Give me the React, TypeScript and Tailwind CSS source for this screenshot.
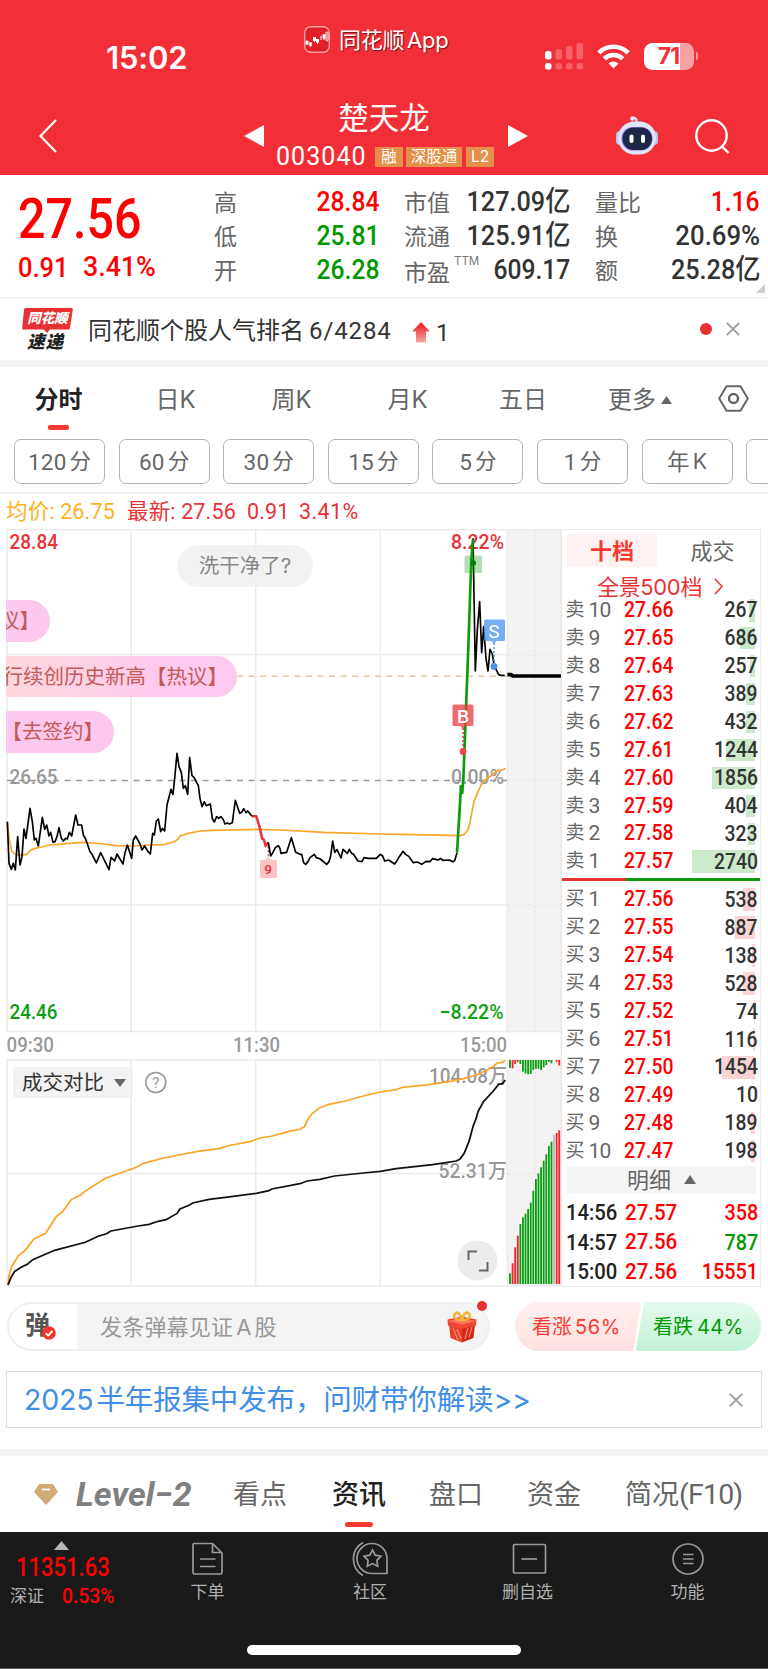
import React from "react";

const DIN = "font-['Roboto','Noto_Sans_CJK_SC',sans-serif] font-medium";

/* Narrow numerals; `right` keeps the right edge in place. */
function Num({ children, className = "", right = false }: { children: React.ReactNode; className?: string; right?: boolean }) {
  return (
    <span className={`${DIN} inline-block scale-x-[0.88] whitespace-nowrap ${right ? "origin-right" : "origin-left"} ${className}`}>
      {children}
    </span>
  );
}

function CloseIcon({ className }: { className: string }) {
  return (
    <svg viewBox="0 0 14 14" className={className} stroke="#999" strokeWidth="1.7" fill="none">
      <path d="M.8 .8 13.2 13.2M13.2 .8 .8 13.2" />
    </svg>
  );
}

function StatusBar() {
  return (
    <div className="flex h-[88px] items-start">
      <div className="ml-[106px] mt-[37.500px] w-[198px] text-[31px] font-semibold leading-[40px] tracking-[-0.200px]">15:02</div>
      <svg viewBox="0 0 26 27" className="mt-[26px] h-[27px] w-[26px]">
        <rect x=".7" y=".7" width="24.6" height="25.6" rx="6" fill="#e21f26" stroke="#f9a0a3" strokeWidth="1.4" />
        <g stroke="#fff" strokeWidth="1" fill="#fff">
          <path d="M3 14v5M6.500 16v5M10.500 11v5M13.500 13v5M17 10v4M20 8v6" fill="none" />
          <rect x="2" y="15.500" width="2" height="2.500" />
          <rect x="5.700" y="17" width="1.600" height="2.500" fill="none" />
          <rect x="9.500" y="11.500" width="2" height="3" fill="none" />
          <rect x="12.500" y="13.500" width="2" height="2.500" />
          <rect x="19" y="9" width="2" height="3" />
          <rect x="22" y="6" width="2" height="9" rx="1" fill="none" />
        </g>
      </svg>
      <div className="ml-[9px] mt-[24.500px] w-[206px] text-[22px] leading-[30px] tracking-[-0.300px] [text-shadow:1px_1px_1px_rgba(0,0,0,0.55)]">
        同花顺<span className="ml-[3px]">App</span>
      </div>
      <svg viewBox="0 0 38 27" className="mt-[43px] h-[27px] w-[38px]" fill="#fff">
        <rect x="0" y="8" width="6.500" height="8.500" rx="2.500" />
        <rect x="0" y="20" width="6.500" height="6.500" rx="2.500" />
        <g opacity=".25">
          <rect x="10.500" y="6" width="6.500" height="10.500" rx="2.500" />
          <rect x="21" y="3" width="6.500" height="13.500" rx="2.500" />
          <rect x="31.500" y="0" width="6.500" height="16.500" rx="2.500" />
          <rect x="10.500" y="20" width="6.500" height="6.500" rx="2.500" />
          <rect x="21" y="20" width="6.500" height="6.500" rx="2.500" />
          <rect x="31.500" y="20" width="6.500" height="6.500" rx="2.500" />
        </g>
      </svg>
      <svg viewBox="0 0 33 25" className="ml-[13.500px] mt-[44px] h-[25px] w-[33px]" fill="none" stroke="#fff" strokeWidth="4.600">
        <path d="M1.800 8.800a21 21 0 0 1 29.400 0" />
        <path d="M7.300 14.800a13.200 13.200 0 0 1 18.400 0" />
        <path d="M16.500 24.500l-4.900-5a7 7 0 0 1 9.800 0z" fill="#fff" stroke="none" />
      </svg>
      <div className="ml-[14px] mt-[43px] flex items-center">
        <div className="flex h-[26.500px] w-[50px] items-center justify-center rounded-[8.500px] bg-[linear-gradient(90deg,#fff_71%,#f9a0a3_71%)] text-[23px] font-bold leading-none tracking-[-0.800px] text-[#f22f37]">
          71
        </div>
        <div className="ml-[2px] h-[8px] w-[2.500px] rounded-r-full bg-[#f9a0a3]" />
      </div>
    </div>
  );
}

function TitleBar() {
  return (
    <div className="flex h-[87px] items-start">
      <svg viewBox="0 0 18 34" className="ml-[39px] mt-[31px] h-[34px] w-[18px]" fill="none" stroke="#fff" strokeWidth="2.200">
        <path d="M17 1 1.500 17 17 33" />
      </svg>
      <svg viewBox="0 0 20 22" className="ml-[187px] mt-[37px] h-[22px] w-[20px]" fill="#fff">
        <path d="M0 11 20 0V22z" />
      </svg>
      <div className="w-[244px] pt-[12px]">
        <div className="pr-[4px] text-center text-[30.500px] leading-[36px]">楚天龙</div>
        <div className="ml-[12px] mt-[9px] flex h-[24px] items-center">
          <span className="w-[99px] font-['Roboto'] text-[25px] leading-[24px] tracking-[1.050px]">003040</span>
          <span className="flex h-[20px] w-[28px] items-center justify-center bg-[#e5904a] text-[15.500px]">融</span>
          <span className="ml-[3px] flex h-[20px] w-[56px] items-center justify-center bg-[#e5904a] text-[15.500px]">深股通</span>
          <span className="ml-[4px] flex h-[20px] w-[28px] items-center justify-center bg-[#e5904a] text-[15.500px]">L2</span>
        </div>
      </div>
      <svg viewBox="0 0 20 22" className="mt-[37px] h-[22px] w-[20px]" fill="#fff">
        <path d="M20 11 0 0V22z" />
      </svg>
      <svg viewBox="0 0 42 39" className="ml-[88px] mt-[28px] h-[39px] w-[42px]">
        <path d="M20.500 7V4.500q0-2.500-3-2.800" stroke="#cfd6f2" strokeWidth="2.200" fill="none" />
        <circle cx="16.500" cy="2.500" r="2.300" fill="#e6eafb" />
        <rect x="0" y="15" width="8" height="14" rx="4" fill="#b9c4ee" />
        <rect x="34" y="15" width="8" height="14" rx="4" fill="#b9c4ee" />
        <rect x="2" y="5.500" width="38" height="33" rx="16.500" fill="#dfe5fa" />
        <rect x="5.500" y="11" width="31" height="23.500" rx="11.500" fill="#8d7bf0" />
        <rect x="6.500" y="11.500" width="29.500" height="22.500" rx="11" fill="#1d2748" />
        <rect x="13.500" y="18.500" width="4" height="8.500" rx="2" fill="#fff" />
        <rect x="25" y="18.500" width="4" height="8.500" rx="2" fill="#fff" />
      </svg>
      <svg viewBox="0 0 35 35" className="ml-[37px] mt-[31px] h-[35px] w-[35px]" fill="none" stroke="#fff" strokeWidth="2.400">
        <circle cx="16.500" cy="16.500" r="15.200" />
        <path d="M27 27.500 33.500 34" />
      </svg>
    </div>
  );
}

function QuoteCol({ rows, className }: { rows: [React.ReactNode, string, string][]; className: string }) {
  return (
    <div className={className}>
      {rows.map(([label, value, color], i) => (
        <div key={i} className="flex h-[34px] items-center justify-between whitespace-nowrap">
          <span className="pt-[2px] text-[23px] leading-[32px] text-[#666]">{label}</span>
          <Num right className={`text-[28px] leading-[34px] ${value.endsWith("亿") ? "scale-x-[0.9]!" : value.endsWith("%") ? "scale-x-[0.92]!" : ""} ${color}`}>{value}</Num>
        </div>
      ))}
    </div>
  );
}

function Quote() {
  return (
    <section className="flex h-[124px] border-b-2 border-[#f3f3f3] pt-[10px]">
      <div className="w-[214px] pl-[18px] text-[#f00]">
        <div className="mt-[5px] h-[56px]"><Num className="text-[55px] leading-[58px]">27.56</Num></div>
        <div className="mt-[4px] flex h-[34px] text-[28px] leading-[34px]">
          <span className="w-[64.500px]"><Num className="scale-x-[0.91]!">0.91</Num></span>
          <Num className="scale-x-[0.955]!">3.41%</Num>
        </div>
      </div>
      <QuoteCol className="w-[165px]" rows={[["高", "28.84", "text-[#f00]"], ["低", "25.81", "text-[#009900]"], ["开", "26.28", "text-[#009900]"]]} />
      <QuoteCol
        className="ml-[25px] w-[166px]"
        rows={[
          ["市值", "127.09亿", "text-[#333]"],
          ["流通", "125.91亿", "text-[#333]"],
          [<span className="flex items-start pt-[3px]">市盈<span className="ml-[4px] mt-[-1px] text-[11.500px] leading-[11px] text-[#777]">TTM</span></span>, "609.17", "text-[#333]"],
        ]}
      />
      <QuoteCol className="ml-[25px] w-[165px]" rows={[["量比", "1.16", "text-[#f00]"], ["换", "20.69%", "text-[#333]"], ["额", "25.28亿", "text-[#333]"]]} />
      <svg viewBox="0 0 9 9" className="-ml-[4px] mb-[4px] h-[9px] w-[9px] self-end" fill="#ccc">
        <path d="M9 0V9H0z" />
      </svg>
    </section>
  );
}

function Banner() {
  return (
    <section className="flex h-[61px] items-start">
      <div className="relative ml-[22px] mt-[9px] h-[43px] w-[51px]">
        <svg viewBox="0 0 51 43" className="absolute inset-0 h-[43px] w-[51px]">
          <path d="M3.500 0H49.500q1.500 0 1.300 1.500L48 20q-.3 1.500-2 1.500H28l-3 3.500-3-3.500H1.500q-1.500 0-1.300-1.500L2 1.500Q2.200 0 3.500 0z" fill="#e93033" />
        </svg>
        <div className="relative flex h-[22px] items-center justify-center text-[13.500px] font-black italic leading-none text-white">同花顺</div>
        <div className="relative ml-[5px] mt-[3px] text-[17.500px] font-black italic leading-[18px] tracking-[1px] text-[#222]">速递</div>
      </div>
      <div className="ml-[15px] mt-[15.500px] w-[324px] whitespace-nowrap text-[24px] leading-[32px] text-[#333]">
        同花顺个股人气排名<span className="ml-[5px] font-['Roboto'] tracking-[0.900px]">6/4284</span>
      </div>
      <svg viewBox="0 0 18 21" className="mt-[23px] h-[21px] w-[18px]">
        <defs>
          <linearGradient id="up" x1="0" y1="0" x2="0" y2="1">
            <stop offset="0.200" stopColor="#e93033" />
            <stop offset="1" stopColor="#f8a9a9" />
          </linearGradient>
        </defs>
        <path d="M9 0 18 9.500H14V20.500H4V9.500H0z" fill="url(#up)" />
      </svg>
      <div className="ml-[6px] mt-[17.500px] w-[264px] font-['Roboto'] text-[24px] leading-[32px] text-[#333]">1</div>
      <div className="mt-[24px] h-[12px] w-[12px] rounded-full bg-[#ea3032]" />
      <CloseIcon className="ml-[14px] mt-[23px] h-[14px] w-[14px]" />
    </section>
  );
}

function PeriodTabs() {
  return (
    <nav className="flex h-[68px] items-start text-[24px] leading-[32px] text-[#666]">
      <div className="w-[117px] pt-[17px] text-center font-bold text-[#222]">
        分时
        <div className="mx-auto mt-[9px] h-[5px] w-[21px] rounded-[2px] bg-[#fd3a31]" />
      </div>
      <div className="w-[117px] pt-[17px] text-center">日K</div>
      <div className="w-[115px] pt-[17px] text-center">周K</div>
      <div className="w-[117px] pt-[17px] text-center">月K</div>
      <div className="w-[114px] pt-[17px] text-center">五日</div>
      <div className="flex w-[138px] items-center pl-[28px] pt-[17px]">
        更多
        <svg viewBox="0 0 11 8" className="ml-[5px] h-[8px] w-[11px]" fill="#666"><path d="M5.500 0 11 8H0z" /></svg>
      </div>
      <svg viewBox="0 0 31 27" className="mt-[18px] h-[27px] w-[31px]" fill="none" stroke="#666" strokeWidth="2">
        <path d="M8.500 1.200H22.500L29.800 13.500 22.500 25.800H8.500L1.200 13.500z" strokeLinejoin="round" />
        <circle cx="15.500" cy="13.500" r="4.500" strokeWidth="2.400" />
      </svg>
    </nav>
  );
}

function Minutes() {
  const items = [["120", "分"], ["60", "分"], ["30", "分"], ["15", "分"], ["5", "分"], ["1", "分"], ["年", "K"], ["", ""]];
  return (
    <div className="flex h-[59px] gap-[13.600px] overflow-hidden border-b-2 border-[#efefef] pl-[14px] pt-[4px]">
      {items.map(([a, b], i) => (
        <div key={i} className="flex h-[45px] w-[91px] shrink-0 items-center justify-center gap-[3px] rounded-[7px] border-[1.500px] border-[#b4b4b4] pt-[1px] leading-none text-[#666]">
          <span className="font-['Roboto','Noto_Sans_CJK_SC',sans-serif] text-[22.500px] tracking-[0.200px]">{a}</span>
          <span className="text-[21.500px]">{b}</span>
        </div>
      ))}
    </div>
  );
}

function InfoLine() {
  return (
    <div className="flex h-[35px] items-center pl-[6px] font-['Roboto','Noto_Sans_CJK_SC',sans-serif] text-[21.500px] leading-[30px] tracking-[0.150px] text-[#e83236]">
      <span className="w-[121px] text-[#fcb21c]">均价: 26.75</span>
      <span className="w-[120px]">最新: 27.56</span>
      <span className="w-[52px]">0.91</span>
      <span className="tracking-[0.400px]">3.41%</span>
    </div>
  );
}

const PRICE_MORNING =
  "22,905 27,1030 34,1048 40,1030 46,1050 53,950 60,1035 66,1010 72,927 78,955 90,865 97,905 103,960 108,955 115,978 127,892 134,928 140,915 147,948 152,937 159,967 165,965 171,950 177,923 184,955 190,963 197,955 202,957 208,937 215,948 227,885 234,915 245,915 250,945 257,957 270,995 276,1003 289,1029 302,998 327,1049 333,1012 344,1023 351,1002 369,1032 375,998 382,975 395,1015 400,960 407,948 420,972 426,990 434,978 444,995 451,1002 458,940 463,945 469,903 475,897 482,935 487,925 494,933 501,855 513,808 519,823 524,775 531,700 537,740 544,758 550,805 556,797 563,823 569,713 576,767 582,772 595,797 600,835 606,860 613,845 619,857 631,852 637,895 643,906 650,890 656,895 662,890 669,897 675,912 682,909 688,912 697,908 700,885 706,841 719,880 725,877 731,866 738,878 743,873 756,889";
const PRICE_NINE = "756,889 769,889 776,912 780,925 786,955 792,960 797,978 805,967";
const PRICE_AFTERNOON =
  "-35,967 -28,1008 -22,999 -14,983 -5,977 0,985 3,1000 20,997 27,975 34,953 47,997 60,1003 65,1003 71,1028 77,1033 84,1025 90,1013 103,1003 109,1013 121,1017 140,1033 147,1025 152,1008 158,963 164,997 171,989 183,1014 189,988 202,1000 208,988 215,1000 221,1003 234,1023 246,1025 252,1013 264,1015 289,1015 301,1003 308,1008 314,1023 326,1020 344,1032 351,1022 358,1010 369,994 377,1003 387,1010 400,1028 412,1026 425,1033 438,1024 450,1025 457,1016 467,1018 475,1020 482,1015 489,1021 508,1020 518,1025 524,1022 531,998";
const PRICE_SURGE = "531,998 543,800 546,818 550,780 565,380 574,120 579,58";
const PRICE_CLOSE =
  "579,55 586,453 592,330 599,245 605,398 611,320 618,415 624,453 630,388 637,402 643,440 650,452 656,464 663,466 674,466";
const AVERAGE =
  "22,905 27,955 35,993 45,1002 60,1006 80,1003 92,990 105,985 125,981 150,975 200,971 250,967 275,969 310,972 350,977 400,978 450,975 490,974 520,966 535,957 540,948 565,940 600,933 640,931 770,928 840,930 920,934 970,937 1140,942 1240,944 1380,947 1393,943 1403,930 1409,912 1415,880 1422,845 1433,818 1443,795 1455,780 1480,762 1495,750 1508,750 1516,745";
const VOL_PREV =
  "22,915 25,885 32,860 50,828 72,808 92,778 125,760 155,710 172,695 197,658 222,645 232,635 290,595 333,578 372,563 395,550 450,534 540,515 605,505 625,498 690,484 715,474 750,468 795,454 825,448 838,440 848,415 860,400 880,383 905,373 950,363 1000,348 1046,336 1090,329 1107,322 1180,314 1240,304 1275,296 1310,286 1340,270 1357,260 1368,249 1382,247 1390,242";
const VOL_NOW =
  "22,915 30,893 40,875 58,862 75,853 90,839 150,811 235,787 270,769 293,761 305,753 380,738 410,733 435,724 457,719 487,700 495,687 520,676 530,669 575,658 620,652 705,640 740,632 748,627 825,611 845,603 880,598 920,588 1000,579 1046,574 1090,566 1190,554 1255,543 1265,538 1277,520 1290,485 1302,437 1310,415 1315,395 1330,365 1357,333 1372,313 1383,311 1390,300";

const R = "#f5222a";
const G = "#0a9f10";
const AUCTION: [number, string][] = [
  [880, G], [850, R], [802, R], [767, R], [732, G], [712, G], [701, G], [687, G], [668, G], [632, G],
  [597, G], [580, G], [562, G], [542, G], [523, G], [498, G], [485, G], [465, "#bbb"], [459, R], [451, R],
];
const UNMATCHED: [number, string][] = [
  [24, G], [25, R], [12, R], [6, R], [12, G], [35, G], [40, G], [43, G], [42, G], [30, G],
  [26, G], [26, G], [30, G], [22, G], [15, G], [6, G], [10, G], [0, G], [6, R], [16, R],
];

function Label({ x, y, w, fill, children, size = 20.5 }: { x: number; y: number; w: number; fill: string; children: string; size?: number }) {
  return (
    <text x={x} y={y} textLength={w} lengthAdjust="spacingAndGlyphs" fill={fill} fontSize={size} className={DIN}>
      {children}
    </text>
  );
}

function Pill({ children, className }: { children: string; className: string }) {
  return (
    <div className={`absolute flex h-[41.500px] items-center justify-end whitespace-nowrap pt-[1px] text-[20.500px] leading-none ${className}`}>
      {children}
    </div>
  );
}

function Chart() {
  return (
    <div className="relative h-[760px] w-[562px] overflow-hidden">
      <svg viewBox="0 529 562 760" className="h-[760px] w-[562px]">
        <rect x="508" y="530" width="54" height="502" fill="#f3f3f3" />
        <rect x="508" y="1060" width="54" height="226" fill="#f3f3f3" />
        <g stroke="#ebebeb" strokeWidth="1.500" fill="none">
          <path d="M6 529.750H562M7 654.500H507M7 905H507M6 1031.500H562M6 1060H562M7 1173.500H507M6 1286H562" />
          <path d="M7 529V1032M131.200 529V1032M255.700 529V1032M380.300 529V1032M507.300 529V1032" />
          <path d="M7 1060V1286M131.200 1060V1286M255.700 1060V1286M380.300 1060V1286M507.300 1060V1286" />
          <path d="M561.300 529V1286" stroke="#e6e6e6" />
          <path d="M508 655H561M508 780H561M508 905H561M508 1174H561M535 530V1032M535 1060V1286" stroke="#e9e9e9" strokeDasharray="2 2" />
        </g>
        <path d="M7 676.300H507" stroke="#e3c9a0" strokeWidth="1.500" strokeDasharray="6 5.500" />
        <path d="M7 780.500H507" stroke="#999" strokeWidth="1.500" strokeDasharray="6 5.500" />

        <Label x={9.5} y={549} w={48.5} fill="#e83236">28.84</Label>
        <Label x={9.5} y={784} w={48} fill="#999">26.65</Label>
        <Label x={9.5} y={1019} w={48} fill={G}>24.46</Label>
        <Label x={451} y={549} w={53} fill="#e83236">8.22%</Label>
        <Label x={451} y={784} w={53} fill="#999">0.00%</Label>
        <Label x={439.5} y={1019} w={64} fill={G}>−8.22%</Label>
        <Label x={6.5} y={1052} w={47.5} fill="#999">09:30</Label>
        <Label x={233} y={1052} w={47} fill="#999">11:30</Label>
        <Label x={460} y={1052} w={47} fill="#999">15:00</Label>
        <Label x={429} y={1083} w={78} fill="#999">104.08万</Label>
        <Label x={438.5} y={1178} w={68.5} fill="#999">52.31万</Label>

        <g fill="none" strokeLinejoin="round" transform="translate(0 520) scale(.33333)" strokeWidth="5">
          <polyline points={AVERAGE} stroke="#faa628" />
          <polyline points={PRICE_MORNING} stroke="#000" />
          <polyline points={PRICE_NINE} stroke="#e93033" strokeWidth="7.500" />
          <path d="M805 967V1020" stroke="#e93033" strokeWidth="3.500" strokeDasharray="6 6" />
          <g transform="translate(840 0)">
            <polyline points={PRICE_AFTERNOON} stroke="#000" />
            <polyline points={PRICE_CLOSE} stroke="#000" />
            <polyline points={PRICE_SURGE} stroke="#0a9a0a" strokeWidth="8" />
            <path d="M545 795V822" stroke="#0a9a0a" strokeWidth="11" />
            <path d="M682 464h12l4 4h145" stroke="#000" strokeWidth="11" />
          </g>
        </g>

        <path d="M260 860h5.500l2.500-3 2.500 3h5a1.500 1.500 0 0 1 1.500 1.500v15a1.500 1.500 0 0 1-1.500 1.500H261.500a1.500 1.500 0 0 1-1.500-1.500z" fill="#fbc3c3" />
        <text x="268" y="874" textAnchor="middle" fontSize="13.500" fill="#e93033" className={DIN}>9</text>

        <rect x="464.500" y="555.500" width="17.500" height="17.500" rx="1.500" fill="#0a9f10" opacity=".32" />
        <circle cx="473.300" cy="563" r="2.800" fill="#067a06" />

        <path d="M485.500 619.500h18a1.500 1.500 0 0 1 1.500 1.500v18.500a1.500 1.500 0 0 1-1.500 1.500h-7l-2.500 3-2.500-3h-6a1.500 1.500 0 0 1-1.500-1.500V621a1.500 1.500 0 0 1 1.500-1.500z" fill="#4a92ee" opacity=".75" />
        <path d="M494 643V664" stroke="#4a92ee" strokeWidth="1.500" strokeDasharray="2 2" />
        <circle cx="494" cy="666.500" r="3.400" fill="#4a92ee" />
        <text x="494" y="637.500" textAnchor="middle" fontSize="19" fill="#fff" className="font-['Roboto']">S</text>

        <path d="M454 704.500h18a1.500 1.500 0 0 1 1.500 1.500v18.500a1.500 1.500 0 0 1-1.500 1.500h-6.500l-2.500 3-2.500-3H454a1.500 1.500 0 0 1-1.500-1.500V706a1.500 1.500 0 0 1 1.500-1.500z" fill="#e93a3c" opacity=".75" />
        <path d="M463 728V749" stroke="#e93a3c" strokeWidth="1.500" strokeDasharray="2 2" />
        <circle cx="463" cy="751.500" r="3.400" fill="#e94a4c" />
        <text x="463" y="722.500" textAnchor="middle" fontSize="19" fill="#fff" className="font-['Roboto'] font-medium">B</text>

        <g transform="translate(0 980) scale(.3635 .33333)">
          <polyline points={VOL_PREV} fill="none" stroke="#faa628" strokeWidth="5" />
          <polyline points={VOL_NOW} fill="none" stroke="#111" strokeWidth="5" />
          {AUCTION.map(([top, c], i) => (
            <rect key={i} x={1400.5 + i * 7.13} y={top} width="5" height={912 - top} fill={c} />
          ))}
          {UNMATCHED.map(([h, c], i) => (
            <rect key={i} x={1400.5 + i * 7.13} y="240" width="5" height={h} fill={c} />
          ))}
        </g>

        <circle cx="477.500" cy="1260.500" r="20" fill="#ececec" />
        <path d="M468.500 1260v-8.500h8.500M487.500 1262v8.500h-8.500" fill="none" stroke="#666" strokeWidth="2" />
        <circle cx="155.800" cy="1082.500" r="10" fill="none" stroke="#999" strokeWidth="1.600" />
        <text x="155.800" y="1088" textAnchor="middle" fontSize="15" fill="#999" className="font-['Roboto']">?</text>
      </svg>

      <div className="absolute left-[13px] top-[538px] flex h-[31px] w-[120px] items-center rounded-[3px] bg-[#f1f1f1]/90 pl-[9px] text-[20.500px] leading-none text-[#333]">
        <span className="pt-[2px]">成交对比</span>
        <svg viewBox="0 0 12 8" className="ml-[10px] h-[8px] w-[12px]" fill="#666"><path d="M0 0H12L6 8z" /></svg>
      </div>

      <div className="absolute left-[6px] top-0 h-[240px] w-[500px] overflow-hidden">
        <Pill className="left-[171px] top-[16px] w-[136px] justify-center! rounded-full bg-[#f0f0f0]/85 text-[#888]">洗干净了?</Pill>
        <Pill className="left-[-100px] top-[71px] w-[144px] rounded-r-full bg-[#fdc5ec]/95 pr-[10px] text-[#c25a58]">议】</Pill>
        <Pill className="left-[-10px] top-[126.500px] w-[241px] rounded-r-full bg-[linear-gradient(90deg,rgba(255,213,216,0.93),rgba(253,197,238,0.93)_70%)] pr-[9px] text-[#c25a58]">行续创历史新高【热议】</Pill>
        <Pill className="left-[-100px] top-[182px] w-[208px] rounded-r-full bg-[#fdc5ec]/95 pr-[10px] text-[#c25a58]">【去签约】</Pill>
      </div>
    </div>
  );
}

type Level = [string, string, string, string];
const ASKS: Level[] = [
  ["10", "27.66", "267", "w-[6px]"], ["9", "27.65", "686", "w-[15.500px]"], ["8", "27.64", "257", "w-[5.500px]"],
  ["7", "27.63", "389", "w-[9.500px]"], ["6", "27.62", "432", "w-[9.500px]"], ["5", "27.61", "1244", "w-[29px]"],
  ["4", "27.60", "1856", "w-[43px]"], ["3", "27.59", "404", "w-[9px]"], ["2", "27.58", "323", "w-[7px]"],
  ["1", "27.57", "2740", "w-[63px]"],
];
const BIDS: Level[] = [
  ["1", "27.56", "538", "w-[12px]"], ["2", "27.55", "887", "w-[20px]"], ["3", "27.54", "138", "w-[3px]"],
  ["4", "27.53", "528", "w-[12px]"], ["5", "27.52", "74", "w-[1px]"], ["6", "27.51", "116", "w-[2px]"],
  ["7", "27.50", "1454", "w-[33px]"], ["8", "27.49", "10", "w-0"], ["9", "27.48", "189", "w-[4px]"],
  ["10", "27.47", "198", "w-[4px]"],
];

function LevelRow({ level, side, bar }: { level: Level; side: string; bar: string }) {
  const [n, price, vol, width] = level;
  return (
    <div className="relative flex h-[27.940px] items-center pl-[3.500px] pr-[2px] text-[22px] leading-[28px]">
      <div className={`absolute right-[5px] top-[3px] h-[22.500px] ${bar} ${width}`} />
      <span className="flex w-[58.500px] items-center text-[19px] text-[#666]">
        {side}
        <span className="ml-[4px] font-['Roboto'] text-[21px] tracking-[-0.800px]">{n}</span>
      </span>
      <Num className="text-[#f00]">{price}</Num>
      <span className="relative ml-auto"><Num right className="text-[#333]">{vol}</Num></span>
    </div>
  );
}

function Trade({ time, price, vol, color }: { time: string; price: string; vol: string; color: string }) {
  return (
    <div className="flex h-[29.500px] items-center pl-[4px] pr-[2px] text-[22.500px] leading-[29px]">
      <span className="w-[58.500px] text-[#222]"><Num className="scale-x-[0.9]!">{time}</Num></span>
      <Num className="scale-x-[0.91]! text-[#f00]">{price}</Num>
      <span className="ml-auto"><Num right className={color}>{vol}</Num></span>
    </div>
  );
}

function OrderBook() {
  return (
    <div className="flex h-[758px] w-[199px] flex-col border-y-[1.500px] border-r-[1.500px] border-[#ebebeb]">
      <div className="flex pl-[5px] pt-[4px] text-[22px] leading-[34px]">
        <div className="h-[33px] w-[90px] rounded-[3px] bg-[#fff2f2] text-center font-bold text-[#fb3a32]">十档</div>
        <div className="w-[103px] pl-[8px] text-center text-[#666]">成交</div>
      </div>
      <div className="flex h-[28px] items-center whitespace-nowrap pl-[35px] pt-[9px] text-[22px] leading-[30px] text-[#e83236]">
        <span className="tracking-[-0.350px]">全景500档</span>
        <svg viewBox="0 0 9 17" className="ml-[12px] h-[17px] w-[9px]" fill="none" stroke="#e83236" strokeWidth="1.600">
          <path d="M1 1 8 8.500 1 16" />
        </svg>
      </div>
      <div className="h-[279.500px]">
        {ASKS.map((l) => <LevelRow key={l[1]} level={l} side="卖" bar="bg-[#cce9cc]" />)}
      </div>
      <div className="mt-[3px] flex h-[3px] shrink-0">
        <div className="w-[64px] bg-[#e93033]" />
        <div className="flex-1 bg-[#0a9a0a]" />
      </div>
      <div className="mt-[4px] h-[279.500px]">
        {BIDS.map((l) => <LevelRow key={l[1]} level={l} side="买" bar="bg-[#fad4d4]" />)}
      </div>
      <div className="ml-[4px] mr-[4px] mt-[1px] flex h-[31px] items-center justify-center bg-[#f5f5f5] pl-[1px] text-[22px] leading-none text-[#666]">
        明细
        <svg viewBox="0 0 12 9" className="ml-[13px] h-[9px] w-[12px]" fill="#666"><path d="M6 0 12 9H0z" /></svg>
      </div>
      <div className="mt-[4px]">
        <Trade time="14:56" price="27.57" vol="358" color="text-[#f00]" />
        <Trade time="14:57" price="27.56" vol="787" color="text-[#009900]" />
        <Trade time="15:00" price="27.56" vol="15551" color="text-[#f00]" />
      </div>
    </div>
  );
}

function CommentBar() {
  return (
    <section className="flex h-[84px] items-start pt-[15px]">
      <div className="relative ml-[7px] h-[49px] w-[483px]">
        <div className="flex h-[49px] items-center overflow-hidden rounded-full border-2 border-[#efefef] bg-[#f4f4f4]">
          <div className="relative flex h-full w-[68px] items-center bg-white pl-[16px] text-[25px] font-bold leading-none text-[#555]">
            <span className="-mt-[3px]">弹</span>
            <svg viewBox="0 0 14 14" className="absolute left-[33px] top-[22px] h-[14px] w-[14px]">
              <circle cx="7" cy="7" r="6.800" fill="#f5362f" />
              <path d="M3.800 7.200 6.200 9.600 10.400 4.800" fill="none" stroke="#fff" strokeWidth="1.800" />
            </svg>
          </div>
          <div className="pl-[23px] text-[22px] leading-[30px] tracking-[0.200px] text-[#999]">
            发条弹幕见证<span className="mx-[3px]">A</span>股
          </div>
          <svg viewBox="0 0 30 32" className="ml-auto mr-[11px] h-[32px] w-[30px]">
            <path d="M1.500 9.500 15 13V31.500L3.500 27z" fill="#e8402b" />
            <path d="M28.500 9.500 15 13V31.500L26.500 27z" fill="#d42a1c" />
            <path d="M.5 8.500 15 5.500 29.500 8.500 29 14.500 15 18 1 14.500z" fill="#f0452f" />
            <path d="M1 10 15 13.500 29 10 15 7.500z" fill="#f87860" />
            <path d="M6 17 11 29M10 18 14 28M21 17 18 28M25 16 22 26" stroke="#f7a08a" strokeWidth="1" />
            <path d="M15 9Q7 9 7 4.500 9 0 12 2.500 14.500 5 15 9 15.500 5 18 2.500 21 0 23 4.500 23 9 15 9z" fill="none" stroke="#f6b23c" strokeWidth="2.600" />
          </svg>
        </div>
        <div className="absolute right-[3px] top-[-1px] h-[10px] w-[10px] rounded-full bg-[#ea3032]" />
      </div>
      <div className="relative ml-[25px] h-[49px] w-[246px]">
        <svg viewBox="0 0 246 49" className="absolute inset-0 h-[49px] w-[246px]">
          <defs>
            <linearGradient id="bull" x1="0" y1="0" x2="0" y2="1">
              <stop offset="0" stopColor="#fff1f0" />
              <stop offset="1" stopColor="#ffe0de" />
            </linearGradient>
            <linearGradient id="bear" x1="0" y1="0" x2="0" y2="1">
              <stop offset="0" stopColor="#e4faee" />
              <stop offset="1" stopColor="#c3f2d9" />
            </linearGradient>
          </defs>
          <path d="M24.500 0H123q3 0 2.700 3L119 46q-.5 3-3.500 3H24.500a24.500 24.500 0 0 1 0-49z" fill="url(#bull)" />
          <path d="M132 0h89.500a24.500 24.500 0 0 1 0 49H124q-3.500 0-3-3L128.500 3q.5-3 3.500-3z" fill="url(#bear)" />
        </svg>
        <div className="relative flex h-[49px] items-center text-[20px] leading-none">
          <span className="w-[120px] pl-[17px] text-[#fb3a32]">看涨<span className="ml-[3px] tracking-[0.600px]">56%</span></span>
          <span className="pl-[18px] text-[#009900]">看跌<span className="ml-[4px] tracking-[0.400px]">44%</span></span>
        </div>
      </div>
    </section>
  );
}

function Notice() {
  return (
    <div className="ml-[6px] flex h-[57px] w-[756px] items-center border-[1.500px] border-[#dcdcdc] pl-[17px] pr-[18px] text-[28.500px] text-[#418ee8]">
      <span className="whitespace-nowrap leading-[36px] tracking-[-0.150px]">
        2025<span className="ml-[3px]">半年报集中发布，问财带你解读</span>&gt;&gt;
      </span>
      <CloseIcon className="ml-auto h-[14px] w-[14px]" />
    </div>
  );
}

function InfoTabs() {
  return (
    <nav className="flex h-[76px] items-start text-[27px] leading-[36px] text-[#666]">
      <svg viewBox="0 0 24 21" className="ml-[34px] mt-[28px] h-[21px] w-[24px]">
        <path d="M5 0H19L24 8 12 21 0 8z" fill="#d2ab77" />
        <path d="M8 5.500H16" stroke="#fff" strokeWidth="1.800" />
      </svg>
      <div className="ml-[18px] mt-[20px] w-[157px] font-['Roboto'] text-[34px] font-bold italic text-[#808080]">Level−2</div>
      <div className="w-[99px] pt-[21px]">看点</div>
      <div className="w-[97px] pt-[21px] font-medium text-[#222]">
        资讯
        <div className="ml-[13px] mt-[9px] h-[5px] w-[28px] rounded-full bg-[#fd3a31]" />
      </div>
      <div className="w-[98px] pt-[21px]">盘口</div>
      <div className="w-[98px] pt-[21px]">资金</div>
      <div className="whitespace-nowrap pt-[21px]">简况<span className="font-['Roboto'] text-[28.500px] tracking-[-0.800px]">(F10)</span></div>
    </nav>
  );
}

function Tool({ label, className, children }: { label: string; className: string; children: React.ReactNode }) {
  return (
    <div className={`flex flex-col items-center pt-[8px] ${className}`}>
      <svg viewBox="0 0 38 38" className="h-[38px] w-[38px]" fill="none" stroke="#999" strokeWidth="1.700">{children}</svg>
      <span className="mt-[4px] text-[17px] leading-[20px] text-[#b0b0b0]">{label}</span>
    </div>
  );
}

function BottomBar() {
  return (
    <footer className="flex h-[137px] flex-col border-b border-[#555] bg-[#1a1a1a]">
      <div className="flex h-[113px]">
        <div className="w-[150px] pt-[9px] text-[#f00]">
          <svg viewBox="0 0 15 9" className="ml-[54px] h-[9px] w-[15px]" fill="#b5b5b5"><path d="M7.500 0 15 9H0z" /></svg>
          <div className="ml-[16px] mt-[3px] h-[29.500px]"><Num className="text-[25px] leading-[30px]">11351.63</Num></div>
          <div className="ml-[10px] flex h-[26px] items-center">
            <span className="w-[52px] text-[17px] leading-[26px] text-[#b0b0b0]">深证</span>
            <Num className="scale-x-[0.92]! text-[21px] leading-[24px]">0.53%</Num>
          </div>
        </div>
        <Tool label="下单" className="w-[115px]">
          <path d="M4.500 3.500H23.500L33 13V32.500a1.500 1.500 0 0 1-1.500 1.500H5.500A1.500 1.500 0 0 1 4 32.500V4.500z M23.500 3.500V12.500H33M11 19H26.500M11 26.500H26.500" />
        </Tool>
        <Tool label="社区" className="ml-[45px] w-[120px]">
          <path d="M12 2.500A19 19 0 0 0 12 35.500M36 33.500H21.500A15 15 0 1 1 36 18.500z" />
          <path d="M21.500 10 24.200 15.200 30 16.200 25.900 20.400 26.700 26.200 21.500 23.600 16.300 26.200 17.100 20.400 13 16.200 18.800 15.200z" />
        </Tool>
        <Tool label="删自选" className="ml-[37px] w-[121px]">
          <rect x="4.500" y="4.500" width="32" height="28.500" rx="1" />
          <path d="M12.500 19H28" />
        </Tool>
        <Tool label="功能" className="ml-[39px] w-[121px]">
          <circle cx="19" cy="19" r="15" />
          <path d="M14 14.500H24.500M14 19H24.500M14 23.500H24.500" />
        </Tool>
      </div>
      <div className="mx-auto h-[9.500px] w-[274px] rounded-full bg-white" />
    </footer>
  );
}

export default function App() {
  return (
    <div className="flex h-[1669px] w-[768px] flex-col overflow-hidden bg-white font-['Inter','Noto_Sans_CJK_SC',sans-serif]">
      <header className="h-[175px] bg-[#f22f37] text-white">
        <StatusBar />
        <TitleBar />
      </header>
      <Quote />
      <Banner />
      <div className="h-[7px] bg-[#f4f4f4]" />
      <PeriodTabs />
      <Minutes />
      <InfoLine />
      <main className="flex h-[758px]">
        <Chart />
        <OrderBook />
      </main>
      <CommentBar />
      <Notice />
      <div className="mt-[21px] h-[7px] bg-[#f4f4f4]" />
      <InfoTabs />
      <BottomBar />
    </div>
  );
}
